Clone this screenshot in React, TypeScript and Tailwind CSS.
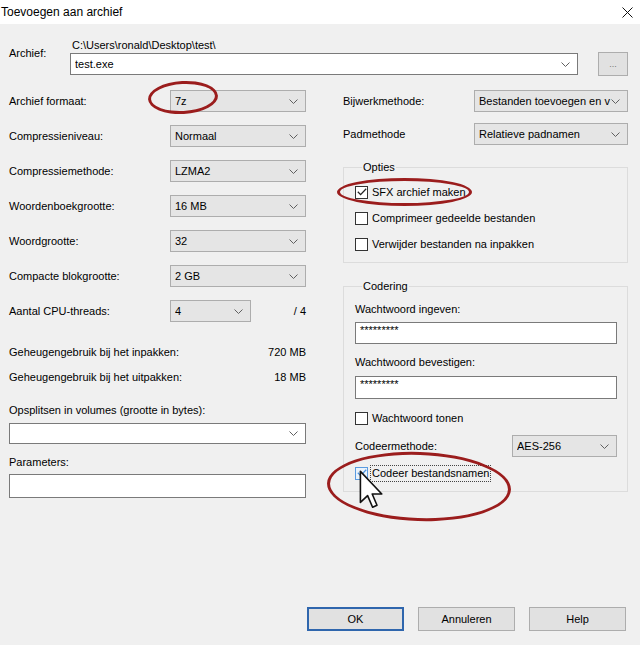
import React from 'react';

const Chevron: React.FC = () => (
  <svg width="9" height="5" viewBox="0 0 9 5" className="shrink-0">
    <path d="M0.5 0.5 L4.5 4.5 L8.5 0.5" fill="none" stroke="#606060" strokeWidth="1" />
  </svg>
);

type ComboProps = { value?: string; className?: string; editable?: boolean };

const Combo: React.FC<ComboProps> = ({ value = '', className = '', editable = false }) => (
  <div
    className={`flex items-center pl-[4px] pr-[7px] border ${
      editable ? 'bg-white border-[#7a7a7a]' : 'bg-[#e5e5e5] border-[#adadad]'
    } ${className}`}
  >
    <span className="flex-1 min-w-0 overflow-hidden whitespace-nowrap">{value}</span>
    <Chevron />
  </div>
);

type CheckProps = { label: string; checked?: boolean; hover?: boolean; focus?: boolean; className?: string };

const Check: React.FC<CheckProps> = ({ label, checked = false, hover = false, focus = false, className = '' }) => (
  <div className={`flex items-center h-[16px] ${className}`}>
    <div
      className={`w-[13px] h-[13px] border flex items-center justify-center shrink-0 ${
        hover ? 'border-[#5a9be0] bg-[#eaf3fc]' : 'border-[#333333] bg-white'
      }`}
    >
      {checked && (
        <svg width="10" height="8" viewBox="0 0 10 8">
          <path d="M0.8 3.8 L3.6 6.6 L9.2 0.8" fill="none" stroke={hover ? '#4a90dc' : '#222222'} strokeWidth="1.3" />
        </svg>
      )}
    </div>
    <span className={`ml-[2px] px-[1px] leading-[15px] ${focus ? 'border border-dotted border-[#444444]' : 'border border-transparent'}`}>
      {label}
    </span>
  </div>
);

const Row: React.FC<{ label: string; children: React.ReactNode; className?: string }> = ({ label, children, className = '' }) => (
  <div className={`flex items-center h-[22px] ${className}`}>
    <span className="w-[161px] shrink-0">{label}</span>
    {children}
  </div>
);

const Btn: React.FC<{ label: string; primary?: boolean }> = ({ label, primary = false }) => (
  <div
    className={`w-[97px] h-[24px] flex items-center justify-center bg-[#e1e1e1] ${
      primary ? 'border-2 border-[#2f66ad]' : 'border border-[#adadad]'
    }`}
  >
    {label}
  </div>
);

const App: React.FC = () => {
  const leftRows = [
    ['Archief formaat:', '7z'],
    ['Compressieniveau:', 'Normaal'],
    ['Compressiemethode:', 'LZMA2'],
    ['Woordenboekgrootte:', '16 MB'],
    ['Woordgrootte:', '32'],
    ['Compacte blokgrootte:', '2 GB'],
  ];

  return (
    <div className="w-[640px] h-[645px] bg-[#f0f0f0] relative overflow-hidden flex flex-col text-black text-[11px] leading-[16px] font-['Liberation_Sans',Arial,sans-serif]">
      {/* title bar */}
      <div className="h-[24px] bg-white flex items-center justify-between pl-[1px] pr-[7px] shrink-0 text-[12px]">
        <span>Toevoegen aan archief</span>
        <svg width="11" height="11" viewBox="0 0 11 11">
          <path d="M0.5 0.5 L10.5 10.5 M10.5 0.5 L0.5 10.5" stroke="#111111" strokeWidth="1" />
        </svg>
      </div>

      {/* archive path */}
      <div className="flex pl-[9px] mt-[13px]">
        <span className="w-[61px] mt-[8px]">Archief:</span>
        <div className="w-[508px] flex flex-col">
          <span className="pl-[2px] h-[16px]">C:\Users\ronald\Desktop\test\</span>
          <Combo value="test.exe" editable className="h-[22px] pl-[3px]" />
        </div>
        <div className="ml-[20px] mt-[15px] w-[30px] h-[24px] bg-[#e1e1e1] border border-[#adadad] flex items-center justify-center text-[9px] text-[#777777]">
          ...
        </div>
      </div>

      {/* columns */}
      <div className="flex pl-[9px] mt-[14px]">
        {/* left */}
        <div className="w-[297px] flex flex-col gap-[13px]">
          {leftRows.map(([label, value]) => (
            <Row key={label} label={label}>
              <Combo value={value} className="w-[136px] h-[22px]" />
            </Row>
          ))}
          <Row label="Aantal CPU-threads:">
            <Combo value="4" className="w-[81px] h-[22px]" />
            <span className="ml-auto">/ 4</span>
          </Row>

          <div className="flex flex-col">
            <div className="flex justify-between mt-[9px]">
              <span>Geheugengebruik bij het inpakken:</span>
              <span>720 MB</span>
            </div>
            <div className="flex justify-between mt-[9px]">
              <span>Geheugengebruik bij het uitpakken:</span>
              <span>18 MB</span>
            </div>
            <span className="mt-[17px]">Opsplitsen in volumes (grootte in bytes):</span>
            <Combo editable className="mt-[5px] h-[21px]" />
            <span className="mt-[10px]">Parameters:</span>
            <div className="mt-[4px] h-[24px] bg-white border border-[#7a7a7a]" />
          </div>
        </div>

        {/* right */}
        <div className="w-[285px] ml-[37px] flex flex-col">
          <div className="flex items-center h-[22px]">
            <span className="w-[131px] shrink-0">Bijwerkmethode:</span>
            <Combo value="Bestanden toevoegen en v" className="w-[154px] h-[22px] pr-[6px]" />
          </div>
          <div className="flex items-center h-[22px] mt-[11px]">
            <span className="w-[131px] shrink-0">Padmethode</span>
            <Combo value="Relatieve padnamen" className="w-[154px] h-[22px]" />
          </div>

          <fieldset className="mt-[14px] border border-[#dcdcdc] pl-[11px] pb-[10px]">
            <legend className="ml-[7px] px-[1px]">Opties</legend>
            <Check label="SFX archief maken" checked className="mt-[9px]" />
            <Check label="Comprimeer gedeelde bestanden" className="mt-[10px]" />
            <Check label="Verwijder bestanden na inpakken" className="mt-[10px]" />
          </fieldset>

          <fieldset className="mt-[15px] border border-[#dcdcdc] pl-[11px] pr-[10px] pb-[10px] flex flex-col">
            <legend className="ml-[7px] px-[1px]">Codering</legend>
            <span className="mt-[7px]">Wachtwoord ingeven:</span>
            <div className="mt-[5px] h-[22px] bg-white border border-[#7a7a7a] pl-[4px] leading-[14px] text-[11px]">
              *********
            </div>
            <span className="mt-[10px]">Wachtwoord bevestigen:</span>
            <div className="mt-[6px] h-[23px] bg-white border border-[#7a7a7a] pl-[4px] leading-[14px] text-[11px]">
              *********
            </div>
            <Check label="Wachtwoord tonen" className="mt-[11px]" />
            <div className="flex items-center h-[22px] mt-[9px]">
              <span className="flex-1">Codeermethode:</span>
              <Combo value="AES-256" className="w-[105px] h-[22px]" />
            </div>
            <Check label="Codeer bestandsnamen" checked hover focus className="mt-[8px]" />
          </fieldset>
        </div>
      </div>

      {/* buttons */}
      <div className="mt-auto mb-[14px] pr-[14px] flex justify-end gap-[14px]">
        <Btn label="OK" primary />
        <Btn label="Annuleren" />
        <Btn label="Help" />
      </div>

      {/* red annotation ellipses */}
      <div className="absolute left-[148px] top-[81px] w-[70px] h-[33px] rounded-[50%] border-[3px] border-[#9b1d1d] -rotate-3" />
      <div className="absolute left-[337px] top-[178px] w-[135px] h-[28px] rounded-[50%] border-[3px] border-[#9b1d1d]" />
      <div className="absolute left-[327px] top-[452px] w-[184px] h-[69px] rounded-[50%] border-[3px] border-[#9b1d1d] rotate-2" />

      {/* mouse cursor */}
      <svg className="absolute left-[359px] top-[470px]" width="25" height="41" viewBox="0 0 12.5 20.5">
        <path
          d="M0.7 0.7 V16.2 L4.3 12.8 L6.8 18.6 L9.0 17.6 L6.6 12.0 H11.4 Z"
          fill="#ffffff"
          stroke="#111111"
          strokeWidth="0.8"
          strokeLinejoin="round"
        />
      </svg>
    </div>
  );
};

export default App;
